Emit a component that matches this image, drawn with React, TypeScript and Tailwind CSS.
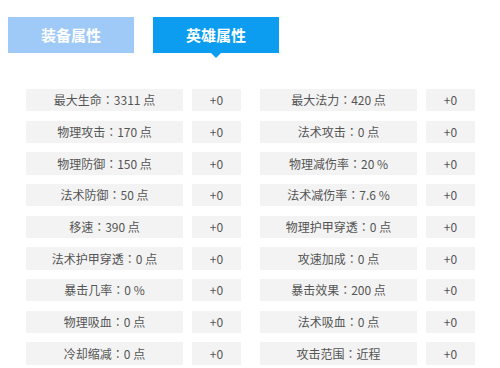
import React from "react";

const rows: [string, string][] = [
  ["最大生命：3311 点", "最大法力：420 点"],
  ["物理攻击：170 点", "法术攻击：0 点"],
  ["物理防御：150 点", "物理减伤率：20 %"],
  ["法术防御：50 点", "法术减伤率：7.6 %"],
  ["移速：390 点", "物理护甲穿透：0 点"],
  ["法术护甲穿透：0 点", "攻速加成：0 点"],
  ["暴击几率：0 %", "暴击效果：200 点"],
  ["物理吸血：0 点", "法术吸血：0 点"],
  ["冷却缩减：0 点", "攻击范围：近程"],
];

function Label({ text }: { text: string }) {
  const [k, v] = text.split("：");
  return (
    <span>
      {k}
      <span style={{ fontFamily: '"Noto Sans CJK TC", sans-serif' }}>：</span>
      {v}
    </span>
  );
}

export default function App() {
  return (
    <div
      className="w-[500px] h-[368px] bg-white overflow-hidden"
      style={{ fontFamily: '"Noto Sans CJK SC", "Noto Sans", sans-serif' }}
    >
      <div className="flex pl-[8px] pt-[17px] gap-[19px]">
        <div className="w-[126px] h-[36px] bg-[#9fc9f7] text-white font-bold text-[15px] flex items-center justify-center">
          装备属性
        </div>
        <div className="relative w-[126px] h-[36px] bg-[#0c9df0] text-white font-bold text-[15px] flex items-center justify-center">
          英雄属性
          <div className="absolute left-1/2 -translate-x-1/2 top-full w-0 h-0 border-l-[5px] border-r-[5px] border-t-[5px] border-l-transparent border-r-transparent border-t-[#0c9df0]" />
        </div>
      </div>
      <div className="flex flex-col gap-[9.35px] pl-[26px] mt-[36px] text-[12px] text-[#555]">
        {rows.map(([a, b], i) => (
          <div key={i} className="flex h-[22.33px]">
            <div className="w-[157px] bg-[#f3f3f3] flex items-center justify-center">
              <Label text={a} />
            </div>
            <div className="w-[49px] ml-[9px] bg-[#f3f3f3] flex items-center justify-center">+0</div>
            <div className="w-[157px] ml-[19px] bg-[#f3f3f3] flex items-center justify-center">
              <Label text={b} />
            </div>
            <div className="w-[49px] ml-[9px] bg-[#f3f3f3] flex items-center justify-center">+0</div>
          </div>
        ))}
      </div>
    </div>
  );
}
